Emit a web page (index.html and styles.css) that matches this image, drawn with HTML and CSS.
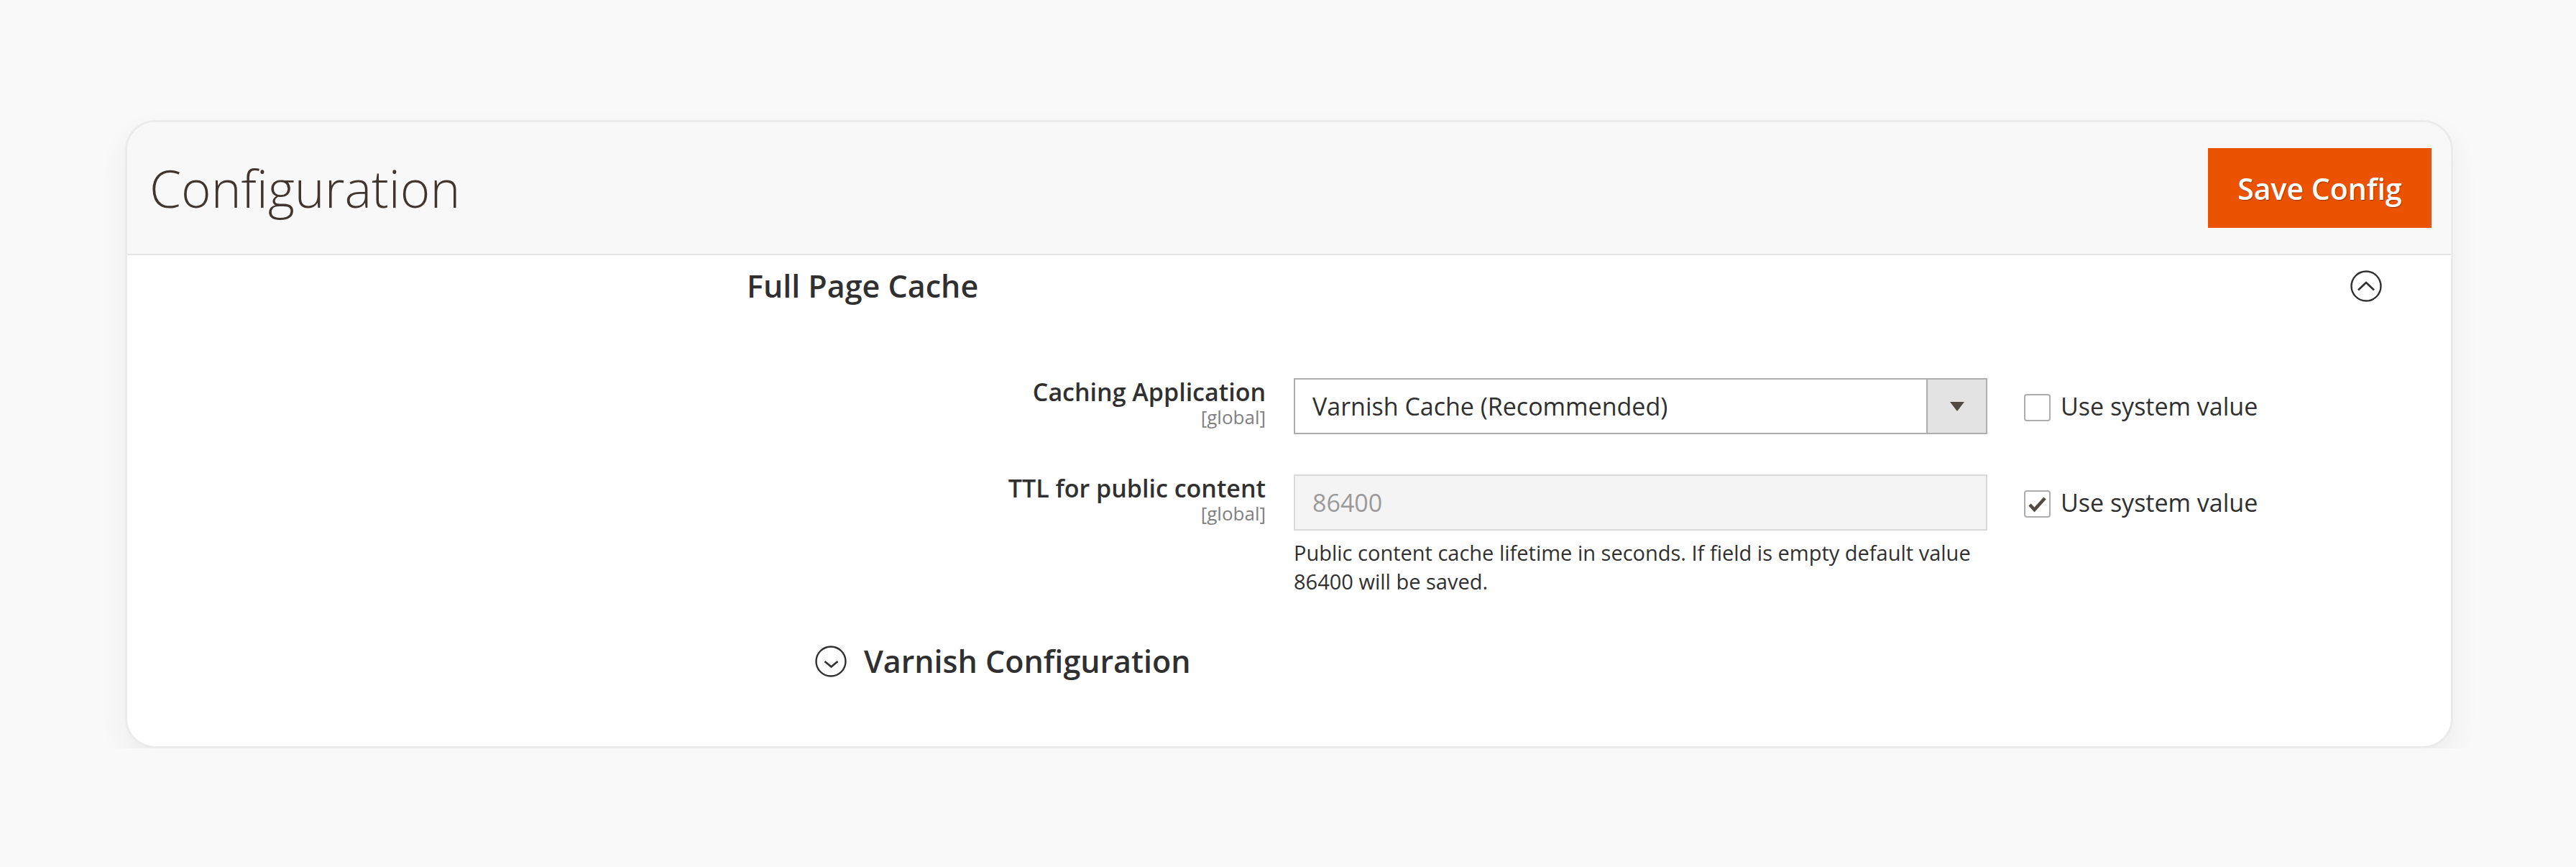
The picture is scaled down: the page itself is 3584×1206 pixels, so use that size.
FILE: index.html
```html
<!DOCTYPE html>
<html lang="en">
<head>
<meta charset="utf-8">
<title>Configuration</title>
<link rel="stylesheet" href="styles.css">
</head>
<body>
<div class="page">
  <div class="card">
    <header class="card-header">
      <h1 class="page-title">Configuration</h1>
      <button class="btn-primary" type="button">Save Config</button>
    </header>
    <div class="card-body">
      <div class="section-head">
        <span class="section-title">Full Page Cache</span>
        <svg class="toggle-icon" width="44" height="44" viewBox="0 0 44 44" aria-hidden="true">
          <circle cx="22" cy="22" r="20.5" fill="none" stroke="#303030" stroke-width="2.4"/>
          <polyline points="11,27.5 22,17 33,27.5" fill="none" stroke="#303030" stroke-width="2.6"/>
        </svg>
      </div>

      <div class="form-rows">
        <div class="form-row row-1">
          <div class="label-col">
            <span class="label">Caching Application</span>
            <span class="scope">[global]</span>
          </div>
          <div class="value-col">
            <div class="select">
              <span class="select-text">Varnish Cache (Recommended)</span>
              <span class="select-arrow"><span class="triangle"></span></span>
            </div>
          </div>
          <div class="check-col">
            <span class="checkbox"></span>
            <span class="check-label">Use system value</span>
          </div>
        </div>

        <div class="form-row row-2">
          <div class="label-col">
            <span class="label">TTL for public content</span>
            <span class="scope">[global]</span>
          </div>
          <div class="value-col">
            <div class="input disabled">86400</div>
            <p class="note">Public content cache lifetime in seconds. If field is empty default value 86400 will be saved.</p>
          </div>
          <div class="check-col">
            <span class="checkbox checked">
              <svg width="33" height="34" viewBox="0 0 33 34" aria-hidden="true">
                <polyline points="6,18 12.5,25 27,9" fill="none" stroke="#514943" stroke-width="4.6"/>
              </svg>
            </span>
            <span class="check-label">Use system value</span>
          </div>
        </div>
      </div>

      <div class="subsection">
        <svg class="toggle-icon" width="44" height="44" viewBox="0 0 44 44" aria-hidden="true">
          <circle cx="22" cy="22" r="20.5" fill="none" stroke="#303030" stroke-width="2.4"/>
          <polyline points="13.5,22 22.5,29.5 31.5,22" fill="none" stroke="#303030" stroke-width="2.6"/>
        </svg>
        <span class="section-title">Varnish Configuration</span>
      </div>
    </div>
  </div>
</div>
</body>
</html>
```

FILE: styles.css
```css
* {
  box-sizing: border-box;
}

html, body {
  margin: 0;
  padding: 0;
}

body {
  background: #f9f9f9;
  font-family: "Open Sans", "Liberation Sans", sans-serif;
  color: #303030;
}

.page {
  padding: 167px 0 0 174px;
  width: 3413px;
}

.card {
  width: 3239px;
  background: #ffffff;
  border: 3px solid #ebebeb;
  border-radius: 42px;
  overflow: hidden;
  box-shadow: 0 18px 40px rgba(0, 0, 0, 0.055);
}

.card-header {
  height: 185px;
  background: #f8f8f8;
  border-bottom: 2px solid #e3e3e3;
  display: flex;
  align-items: center;
  justify-content: space-between;
  padding: 0 27px 0 31px;
}

.page-title {
  margin: 0;
  font-size: 71px;
  font-weight: 300;
  line-height: 1.2;
  color: #41362f;
  letter-spacing: 0;
}

.btn-primary {
  width: 311px;
  height: 111px;
  border: 0;
  border-radius: 0;
  background: #eb5202;
  color: #ffffff;
  font-family: "Open Sans", "Liberation Sans", sans-serif;
  font-size: 41px;
  font-weight: 600;
  text-shadow: 1px 1px 1px rgba(0, 0, 0, 0.35);
  display: flex;
  align-items: center;
  justify-content: center;
  padding: 0;
}

.card-body {
  padding: 19px 96px 94px 862px;
}

.section-head {
  height: 48px;
  display: flex;
  align-items: center;
  justify-content: space-between;
}

.section-title {
  font-size: 43px;
  font-weight: 600;
  line-height: 48px;
  color: #303030;
}

.toggle-icon {
  display: block;
  flex: none;
}

.form-rows {
  margin-top: 104px;
  display: flex;
  flex-direction: column;
  gap: 56px;
}

.form-row {
  display: flex;
  align-items: flex-start;
}

.label-col {
  width: 722px;
  display: flex;
  flex-direction: column;
  align-items: flex-end;
  padding-top: 0;
  text-align: right;
}

.label {
  font-size: 34px;
  font-weight: 600;
  line-height: 38px;
  color: #303030;
}

.scope {
  font-size: 26px;
  line-height: 29px;
  color: #808080;
  margin-top: 2px;
}

.value-col {
  width: 965px;
  margin-left: 39px;
}

.select {
  height: 78px;
  border: 2px solid #adadad;
  background: #ffffff;
  display: flex;
  align-items: stretch;
}

.select-text {
  flex: 1;
  display: flex;
  align-items: center;
  padding-left: 24px;
  font-size: 34px;
  color: #303030;
}

.select-arrow {
  width: 83px;
  border-left: 2px solid #adadad;
  background: #e3e3e3;
  display: flex;
  align-items: center;
  justify-content: center;
}

.triangle {
  width: 0;
  height: 0;
  border-left: 10px solid transparent;
  border-right: 10px solid transparent;
  border-top: 13px solid #514943;
}

.input {
  height: 78px;
  border: 2px solid #d9d9d9;
  display: flex;
  align-items: center;
  padding-left: 24px;
  font-size: 34px;
}

.input.disabled {
  background: #f4f4f4;
  color: #9a9a9a;
}

.note {
  margin: 11px 0 0;
  font-size: 29px;
  line-height: 40px;
  color: #303030;
  padding-right: 10px;
}

.check-col {
  margin-left: 51px;
  height: 78px;
  display: flex;
  align-items: center;
  gap: 14px;
}

.checkbox {
  width: 37px;
  height: 38px;
  border: 2px solid #adadad;
  border-radius: 4px;
  background: #ffffff;
  display: flex;
  align-items: center;
  justify-content: center;
  margin-top: 4px;
}

.check-label {
  font-size: 34px;
  line-height: 40px;
  color: #303030;
}

.subsection {
  margin-top: 67px;
  margin-left: 95px;
  height: 48px;
  display: flex;
  align-items: center;
  gap: 24px;
}
```
